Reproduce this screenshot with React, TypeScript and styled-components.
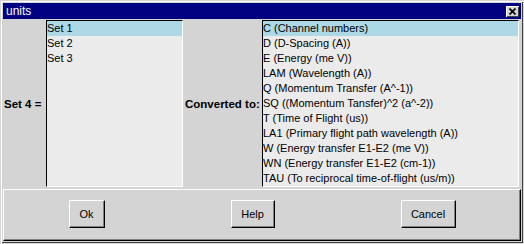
import React from "react";
import styled, { createGlobalStyle } from "styled-components";

const Global = createGlobalStyle`
  html, body { margin: 0; padding: 0; background: #d4d4d4; }
  body { font-family: "Liberation Sans", Arial, sans-serif; font-size: 11px; color: #000; }
`;

const Window = styled.div`
  box-sizing: border-box;
  width: 524px;
  height: 244px;
  padding: 3px;
  background: #d4d4d4;
  box-shadow: inset 1px 1px 0 #d4d4d4, inset 2px 2px 0 #ffffff, inset -1px -1px 0 #d4d4d4, inset -2px -2px 0 #404040;
  display: flex;
  flex-direction: column;
`;

const TitleBar = styled.div`
  height: 16px;
  background: #000080;
  color: #fff;
  display: flex;
  align-items: center;
  justify-content: space-between;
  padding: 0 2px 0 3px;
  font-size: 12px;
`;

const CloseBtn = styled.div`
  box-sizing: border-box;
  width: 13px;
  height: 11px;
  background: #d4d4d4;
  box-shadow: inset 1px 1px 0 #fff, inset -1px -1px 0 #404040;
  display: flex;
  align-items: center;
  justify-content: center;
`;

const Body = styled.div`
  display: flex;
  margin-top: 1px;
  height: 167px;
  padding-right: 2px;
`;

const Label = styled.div<{ $w: number; $pl: number }>`
  width: ${(p) => p.$w}px;
  padding-left: ${(p) => p.$pl}px;
  box-sizing: border-box;
  display: flex;
  align-items: center;
  font-weight: bold;
  font-size: 11.5px;
  white-space: nowrap;
`;

const List = styled.div<{ $w: number }>`
  box-sizing: border-box;
  width: ${(p) => p.$w}px;
  height: 167px;
  background: #ebebeb;
  border-top: 1px solid #000;
  border-left: 1px solid #000;
  border-right: 1px solid #fff;
  border-bottom: 1px solid #fff;
  overflow: hidden;
`;

const Item = styled.div<{ $sel?: boolean }>`
  height: 15px;
  line-height: 15px;
  white-space: nowrap;
  background: ${(p) => (p.$sel ? "#add8e6" : "transparent")};
`;

const Panel = styled.div`
  box-sizing: border-box;
  margin-top: 2px;
  height: 52px;
  border-top: 1px solid #fff;
  border-left: 1px solid #fff;
  border-right: 1px solid #000;
  border-bottom: 1px solid #000;
  box-shadow: inset -1px -1px 0 #808080;
  display: flex;
  justify-content: center;
  align-items: flex-start;
  padding-top: 10px;
  gap: 126px;
`;

const Button = styled.div<{ $w: number }>`
  box-sizing: border-box;
  width: ${(p) => p.$w}px;
  height: 28px;
  display: flex;
  align-items: center;
  justify-content: center;
  border-top: 1px solid #fff;
  border-left: 1px solid #fff;
  border-right: 1px solid #000;
  border-bottom: 1px solid #000;
  box-shadow: inset -1px -1px 0 #808080;
  padding-bottom: 1px;
`;

const units = [
  "C (Channel numbers)",
  "D (D-Spacing (A))",
  "E (Energy (me V))",
  "LAM (Wavelength (A))",
  "Q (Momentum Transfer (A^-1))",
  "SQ ((Momentum Tansfer)^2 (a^-2))",
  "T (Time of Flight (us))",
  "LA1 (Primary flight path wavelength (A))",
  "W (Energy transfer E1-E2 (me V))",
  "WN (Energy transfer E1-E2 (cm-1))",
  "TAU (To reciprocal time-of-flight (us/m))",
];

export default function App() {
  return (
    <>
      <Global />
      <Window>
        <TitleBar>
          <span>units</span>
          <CloseBtn>
            <svg width="7" height="7" viewBox="0 0 7 7">
              <path d="M0.5 0.5 L6.5 6.5 M6.5 0.5 L0.5 6.5" stroke="#000" strokeWidth="1.6" />
            </svg>
          </CloseBtn>
        </TitleBar>
        <Body>
          <Label $w={43} $pl={1}>Set 4 =</Label>
          <List $w={137}>
            <Item $sel>Set 1</Item>
            <Item>Set 2</Item>
            <Item>Set 3</Item>
          </List>
          <Label $w={79} $pl={2}>Converted to:</Label>
          <List $w={257}>
            {units.map((u, i) => (
              <Item key={u} $sel={i === 0}>{u}</Item>
            ))}
          </List>
        </Body>
        <Panel>
          <Button $w={36}>Ok</Button>
          <Button $w={44}>Help</Button>
          <Button $w={55}>Cancel</Button>
        </Panel>
      </Window>
    </>
  );
}
